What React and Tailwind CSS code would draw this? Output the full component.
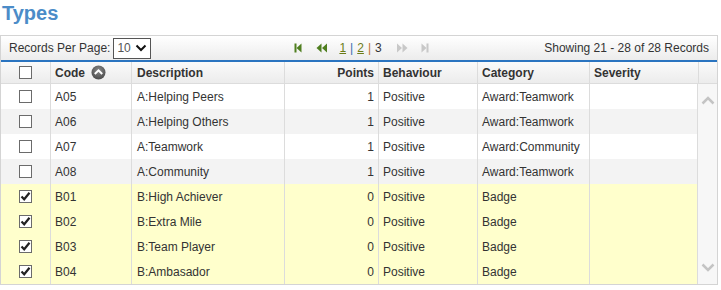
import React from "react";

const rows = [
  { code: "A05", desc: "A:Helping Peers", pts: 1, beh: "Positive", cat: "Award:Teamwork", sel: false },
  { code: "A06", desc: "A:Helping Others", pts: 1, beh: "Positive", cat: "Award:Teamwork", sel: false },
  { code: "A07", desc: "A:Teamwork", pts: 1, beh: "Positive", cat: "Award:Community", sel: false },
  { code: "A08", desc: "A:Community", pts: 1, beh: "Positive", cat: "Award:Teamwork", sel: false },
  { code: "B01", desc: "B:High Achiever", pts: 0, beh: "Positive", cat: "Badge", sel: true },
  { code: "B02", desc: "B:Extra Mile", pts: 0, beh: "Positive", cat: "Badge", sel: true },
  { code: "B03", desc: "B:Team Player", pts: 0, beh: "Positive", cat: "Badge", sel: true },
  { code: "B04", desc: "B:Ambasador", pts: 0, beh: "Positive", cat: "Badge", sel: true },
];

const cols = "grid-cols-[50px_81px_153px_94px_99px_112px_108px]";

function Box({ checked }) {
  return (
    <div className="w-[13px] h-[13px] border border-[#6b6b6b] bg-white flex items-center justify-center">
      {checked && (
        <svg width="11" height="11" viewBox="0 0 11 11">
          <path d="M1.5 5.5 L4.2 8.3 L9.5 1.8" stroke="#222" strokeWidth="2.2" fill="none" />
        </svg>
      )}
    </div>
  );
}

function FirstIcon({ color }) {
  return (
    <svg width="8" height="10" viewBox="0 0 8 10">
      <rect x="0.5" y="0.5" width="2" height="9" fill={color} />
      <path d="M7.5 0.5 L2.5 5 L7.5 9.5 Z" fill={color} />
    </svg>
  );
}
function PrevIcon({ color }) {
  return (
    <svg width="12" height="10" viewBox="0 0 12 10">
      <path d="M5.5 0.5 L0.5 5 L5.5 9.5 Z" fill={color} />
      <path d="M11 0.5 L6 5 L11 9.5 Z" fill={color} />
    </svg>
  );
}

export default function App() {
  return (
    <div className="w-[721px] h-[290px] bg-white overflow-hidden text-[12px] text-[#333]" style={{ fontFamily: '"Liberation Sans", Arial, sans-serif' }}>
      <div className="h-[35px] pl-[2px] pt-[1px] text-[20px] font-bold text-[#4b8cc8] leading-[24px]">Types</div>
      <div className="w-[718px] border-l border-r border-b border-[#d4d4d4]">
        <div className="h-[27px] border-t border-[#d4d4d4] border-b-2 border-b-[#2a74c0] bg-gradient-to-b from-white to-[#ececec] flex items-center pl-[8px] pr-[8px]">
          <span>Records Per Page:</span>
          <div className="ml-[3px] w-[38px] h-[21px] border border-[#555] bg-white flex items-center pl-[3px] gap-[4px]">
            <span className="text-[#555]">10</span>
            <svg width="12" height="8" viewBox="0 0 12 8">
              <path d="M1.5 1.5 L6 6 L10.5 1.5" stroke="#111" strokeWidth="2" fill="none" />
            </svg>
          </div>
          <div className="flex items-center ml-[143px]">
            <FirstIcon color="#4f7f1f" />
            <span className="w-[14px]" />
            <PrevIcon color="#4f7f1f" />
            <span className="w-[11px]" />
            <span className="underline text-[#6b7b16]">1</span>
            <span className="mx-[4px] text-[#3a6fb0]">|</span>
            <span className="underline text-[#6b7b16]">2</span>
            <span className="mx-[4px] text-[#c07030]">|</span>
            <span className="text-[#333]">3</span>
            <span className="w-[14px]" />
            <svg width="12" height="10" viewBox="0 0 12 10">
              <path d="M1 0.5 L6 5 L1 9.5 Z" fill="#c8c8c8" />
              <path d="M6.5 0.5 L11.5 5 L6.5 9.5 Z" fill="#c8c8c8" />
            </svg>
            <span className="w-[13px]" />
            <svg width="8" height="10" viewBox="0 0 8 10">
              <path d="M0.5 0.5 L5.5 5 L0.5 9.5 Z" fill="#c8c8c8" />
              <rect x="5.5" y="0.5" width="2" height="9" fill="#c8c8c8" />
            </svg>
          </div>
          <span className="ml-auto">Showing 21 - 28 of 28 Records</span>
        </div>
        <div className="flex">
          <div className="flex-1">
            <div className={`grid ${cols} h-[22px] bg-gradient-to-b from-[#fafafa] to-[#ececec] border-b border-[#dcdcdc] font-bold`}>
              <div className="flex items-center justify-center border-r border-[#dcdcdc]"><Box /></div>
              <div className="flex items-center pl-[4px] border-r border-[#dcdcdc] gap-[6px]">
                <span>Code</span>
                <svg width="15" height="15" viewBox="0 0 15 15">
                  <defs>
                    <radialGradient id="g" cx="50%" cy="35%" r="60%">
                      <stop offset="0%" stopColor="#8a8a8a" />
                      <stop offset="100%" stopColor="#505050" />
                    </radialGradient>
                  </defs>
                  <circle cx="7.5" cy="7.5" r="7" fill="url(#g)" />
                  <path d="M3.8 9 L7.5 5.3 L11.2 9" stroke="#fff" strokeWidth="2" fill="none" />
                </svg>
              </div>
              <div className="flex items-center pl-[5px] border-r border-[#dcdcdc]">Description</div>
              <div className="flex items-center justify-end pr-[4px] border-r border-[#dcdcdc]">Points</div>
              <div className="flex items-center pl-[4px] border-r border-[#dcdcdc]">Behaviour</div>
              <div className="flex items-center pl-[4px] border-r border-[#dcdcdc]">Category</div>
              <div className="flex items-center pl-[4px]">Severity</div>
            </div>
            {rows.map((r, i) => (
              <div
                key={r.code}
                className={`grid ${cols} h-[25px] ${r.sel ? "bg-[#ffffcc]" : i % 2 === 1 ? "bg-[#f3f3f3]" : "bg-white"}`}
              >
                <div className="flex items-center justify-center border-r border-[#dcdcdc]"><Box checked={r.sel} /></div>
                <div className="flex items-center pl-[4px] border-r border-[#dcdcdc]">{r.code}</div>
                <div className="flex items-center pl-[5px] border-r border-[#dcdcdc]">{r.desc}</div>
                <div className="flex items-center justify-end pr-[4px] border-r border-[#dcdcdc]">{r.pts}</div>
                <div className="flex items-center pl-[4px] border-r border-[#dcdcdc]">{r.beh}</div>
                <div className="flex items-center pl-[4px] border-r border-[#dcdcdc]">{r.cat}</div>
                <div className="flex items-center pl-[4px] border-r border-[#dcdcdc]"></div>
              </div>
            ))}
          </div>
          <div className="w-[20px] flex flex-col">
            <div className="h-[22px] bg-gradient-to-b from-[#fafafa] to-[#ececec] border-b border-[#dcdcdc] border-l border-l-[#dcdcdc]" />
            <div className="flex-1 bg-[#f7f7f7] flex flex-col items-center justify-between pt-[12px] pb-[12px]">
              <svg width="14" height="9" viewBox="0 0 14 9">
                <path d="M1.5 7.5 L7 2 L12.5 7.5" stroke="#c4c4c4" strokeWidth="2.5" fill="none" />
              </svg>
              <svg width="14" height="9" viewBox="0 0 14 9">
                <path d="M1.5 1.5 L7 7 L12.5 1.5" stroke="#c4c4c4" strokeWidth="2.5" fill="none" />
              </svg>
            </div>
          </div>
        </div>
      </div>
    </div>
  );
}
